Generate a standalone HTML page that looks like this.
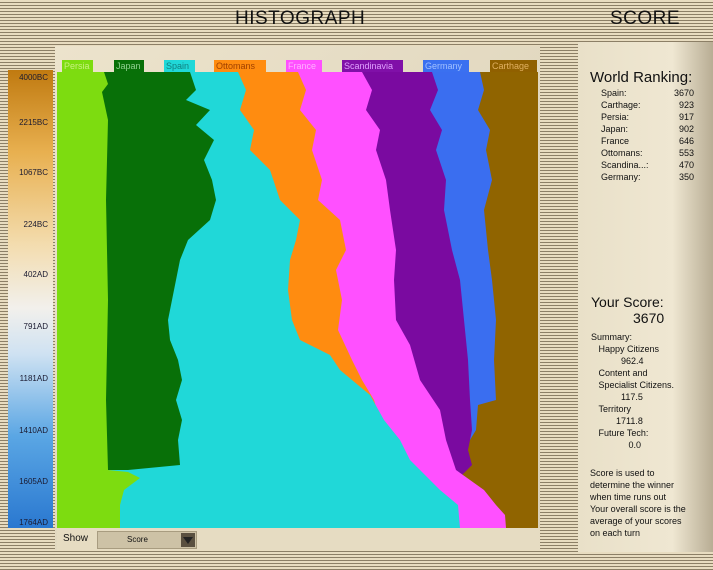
<!DOCTYPE html>
<html><head><meta charset="utf-8"><style>
*{margin:0;padding:0;box-sizing:border-box}
body{width:713px;height:570px;overflow:hidden;position:relative;font-family:"Liberation Sans",sans-serif;
background:repeating-linear-gradient(180deg,#e8dcc0 0px,#e8dcc0 2px,#8c7f66 2px,#8c7f66 3px);}
.hdr{position:absolute;top:8px;font-size:19px;color:#111;letter-spacing:0.5px}
.frame{position:absolute;left:55px;top:46px;width:485px;height:504px;background:linear-gradient(135deg,#ece3cc,#d9cfb5);}
.rp{position:absolute;left:578px;top:42px;width:135px;height:510px;background:linear-gradient(90deg,#e9e0c8,#efe7d2 70%,#b8ad94);}
.axis{position:absolute;left:8px;top:70px;width:45px;height:458px;background:linear-gradient(180deg,#c07a10 0%,#e8b050 18%,#f3dcae 38%,#f2f0ec 52%,#cfe2f2 62%,#5aa6e4 80%,#2a78d0 100%);}
.al{position:absolute;left:14px;font-size:8px;color:#1a1a30;width:34px;text-align:right}
.lab{position:absolute;top:60px;height:12px;font-size:9px;line-height:12px;padding-left:2px}
.rk{position:absolute;left:601px;font-size:9px;color:#111;width:93px}
.rk span{float:right}
.t{position:absolute;font-size:9px;color:#111;line-height:12px}
</style></head><body>
<div class="hdr" style="left:235px">HISTOGRAPH</div>
<div class="hdr" style="left:610px">SCORE</div>
<div class="frame"></div>
<div class="rp"></div>
<div class="axis"></div>
<div class="al" style="top:73px">4000BC</div>
<div class="al" style="top:118px">2215BC</div>
<div class="al" style="top:168px">1067BC</div>
<div class="al" style="top:220px">224BC</div>
<div class="al" style="top:270px">402AD</div>
<div class="al" style="top:322px">791AD</div>
<div class="al" style="top:374px">1181AD</div>
<div class="al" style="top:426px">1410AD</div>
<div class="al" style="top:477px">1605AD</div>
<div class="al" style="top:518px">1764AD</div>
<div class="lab" style="left:62px;width:31px;background:#7ddc10;color:#c8f080">Persia</div>
<div class="lab" style="left:114px;width:30px;background:#087008;color:#90d090">Japan</div>
<div class="lab" style="left:164px;width:31px;background:#20d8d8;color:#108080">Spain</div>
<div class="lab" style="left:214px;width:52px;background:#ff8c10;color:#a04000">Ottomans</div>
<div class="lab" style="left:286px;width:36px;background:#ff50ff;color:#ffb0ff">France</div>
<div class="lab" style="left:342px;width:61px;background:#8010a8;color:#e0a0ff">Scandinavia</div>
<div class="lab" style="left:423px;width:46px;background:#3a70f0;color:#a0c0ff">Germany</div>
<div class="lab" style="left:490px;width:47px;background:#906000;color:#e0b060">Carthage</div>
<svg style="position:absolute;left:0;top:0" width="713" height="570">
<rect x="57" y="72" width="481" height="456" fill="#906400"/>
<polygon fill="#3a6ef0" points="57,72 480,72 484,90 478,110 490,130 486,150 492,180 484,210 488,250 492,280 496,320 494,360 496,400 478,405 476,430 470,440 57,440"/>
<polygon fill="#7a0aa0" points="57,72 432,72 438,90 430,110 442,130 436,150 446,180 444,210 452,250 460,280 464,320 468,360 470,400 472,430 468,450 472,465 462,475 57,475"/>
<polygon fill="#ff50ff" points="57,72 362,72 372,90 366,110 380,130 376,150 386,180 390,210 396,250 394,280 396,320 410,345 420,380 440,410 446,440 456,470 470,480 484,490 496,505 505,515 506,528 57,528"/>
<polygon fill="#ff8c10" points="57,72 298,72 306,90 300,110 316,130 312,150 322,180 318,200 340,220 346,250 336,270 342,300 338,330 352,360 362,380 374,400 380,420 392,440 406,460 420,470 430,485 442,500 452,515 456,528 57,528"/>
<polygon fill="#20d8d8" points="57,72 238,72 246,90 240,110 254,130 250,150 270,170 280,200 300,220 296,240 290,260 288,290 292,320 300,340 330,355 340,370 370,395 384,420 400,440 410,460 420,470 440,490 458,505 460,528 57,528"/>
<polygon fill="#087008" points="57,72 190,72 196,90 186,100 210,110 196,125 214,140 204,160 212,180 216,200 210,220 188,240 180,260 176,280 172,300 168,320 170,340 178,360 182,380 176,400 182,420 178,440 180,465 128,470 57,470"/>
<polygon fill="#7ddc10" points="57,72 104,72 108,84 102,92 108,120 106,200 108,300 106,400 108,470 128,472 140,478 124,490 120,505 120,528 57,528"/>
<rect x="57" y="528" width="483" height="22" fill="#e6dcc2"/>
</svg>
<div class="t" style="left:63px;top:533px;font-size:10px">Show</div>
<div style="position:absolute;left:97px;top:531px;width:100px;height:18px;background:#cdc2a6;border:1px solid #a89c80"></div>
<div class="t" style="left:127px;top:534px;font-size:8px">Score</div>
<div style="position:absolute;left:181px;top:533px;width:14px;height:14px;background:#5a5040"></div>
<div style="position:absolute;left:183px;top:537px;width:0;height:0;border-left:5px solid transparent;border-right:5px solid transparent;border-top:7px solid #222"></div>
<div class="t" style="left:590px;top:69px;font-size:15px;line-height:18px">World Ranking:</div>
<div class="rk" style="top:88px">Spain:<span>3670</span></div>
<div class="rk" style="top:100px">Carthage:<span>923</span></div>
<div class="rk" style="top:112px">Persia:<span>917</span></div>
<div class="rk" style="top:124px">Japan:<span>902</span></div>
<div class="rk" style="top:136px">France<span>646</span></div>
<div class="rk" style="top:148px">Ottomans:<span>553</span></div>
<div class="rk" style="top:160px">Scandina...:<span>470</span></div>
<div class="rk" style="top:172px">Germany:<span>350</span></div>
<div class="t" style="left:591px;top:294px;font-size:14px;line-height:16px">Your Score:</div>
<div class="t" style="left:633px;top:310px;font-size:14px;line-height:16px">3670</div>
<div class="t" style="left:591px;top:331px">Summary:<br>&nbsp;&nbsp;&nbsp;Happy Citizens<br>&nbsp;&nbsp;&nbsp;&nbsp;&nbsp;&nbsp;&nbsp;&nbsp;&nbsp;&nbsp;&nbsp;&nbsp;962.4<br>&nbsp;&nbsp;&nbsp;Content and<br>&nbsp;&nbsp;&nbsp;Specialist Citizens.<br>&nbsp;&nbsp;&nbsp;&nbsp;&nbsp;&nbsp;&nbsp;&nbsp;&nbsp;&nbsp;&nbsp;&nbsp;117.5<br>&nbsp;&nbsp;&nbsp;Territory<br>&nbsp;&nbsp;&nbsp;&nbsp;&nbsp;&nbsp;&nbsp;&nbsp;&nbsp;&nbsp;1711.8<br>&nbsp;&nbsp;&nbsp;Future Tech:<br>&nbsp;&nbsp;&nbsp;&nbsp;&nbsp;&nbsp;&nbsp;&nbsp;&nbsp;&nbsp;&nbsp;&nbsp;&nbsp;&nbsp;&nbsp;0.0</div>
<div class="t" style="left:590px;top:467px">Score is used to<br>determine the winner<br>when time runs out<br>Your overall score is the<br>average of your scores<br>on each turn</div>
</body></html>
